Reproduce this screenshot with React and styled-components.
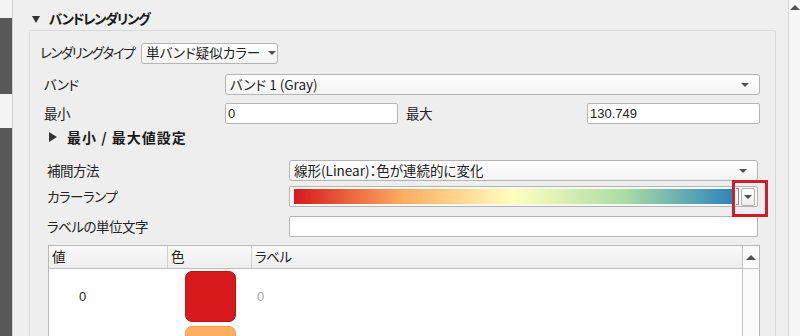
import React from 'react';
import styled, { createGlobalStyle } from 'styled-components';

const Global = createGlobalStyle`
  html, body {
    margin: 0;
    padding: 0;
    background: #efefef;
    overflow: hidden;
  }
  body {
    font-family: "Noto Sans CJK JP", "Noto Sans", "Liberation Sans", sans-serif;
    font-size: 13px;
    color: #222;
    font-feature-settings: "palt";
  }
`;

const Window = styled.div`
  width: 800px;
  height: 336px;
  display: flex;
  overflow: hidden;
`;

const SideStrip = styled.div`
  width: 12px;
  display: flex;
  flex-direction: column;
  border-right: 1px solid #d2d2d2;
`;

const StripBlock = styled.div`
  height: ${p => (p.$h ? `${p.$h}px` : 'auto')};
  flex: ${p => (p.$h ? 'none' : 1)};
  background: ${p => (p.$dark ? '#585858' : '#f4f4f4')};
`;

const Main = styled.div`
  flex: 1;
  min-height: 0;
  padding: 8px 0 0 16px;
  display: flex;
  flex-direction: column;
`;

const SectionTitle = styled.div`
  flex: none;
  height: 22px;
  display: flex;
  align-items: center;
  gap: 9px;
  padding-left: 3px;
  font-weight: 700;
  font-size: 13.5px;
  letter-spacing: -1.4px;
  line-height: 1;
  color: #1a1a1a;
`;

const Arrow = styled.span`
  width: 0;
  height: 0;
  border-left: ${p => (p.$dir === 'right' ? '8px solid #333' : '4.5px solid transparent')};
  border-right: ${p => (p.$dir === 'right' ? '0' : '4.5px solid transparent')};
  border-top: ${p => (p.$dir === 'right' ? '5px solid transparent' : '7px solid #333')};
  border-bottom: ${p => (p.$dir === 'right' ? '5px solid transparent' : '0')};
`;

const GroupBox = styled.div`
  width: 747px;
  flex: 1;
  min-height: 0;
  overflow: hidden;
  border: 1px solid #d8d8d8;
  border-bottom: none;
  border-radius: 2px 2px 0 0;
  background: #eeeeee;
  padding: 11px 0 0 10px;
  box-sizing: border-box;
  display: flex;
  flex-direction: column;
`;

const Row = styled.div`
  flex: none;
  display: flex;
  align-items: center;
  height: ${p => p.$h || 29}px;
  padding-left: ${p => p.$indent || 0}px;
  gap: ${p => p.$gap || 0}px;
`;

const Label = styled.div`
  width: ${p => (p.$w ? `${p.$w}px` : 'auto')};
  flex: none;
  padding-left: ${p => p.$pad || 0}px;
  box-sizing: border-box;
  font-size: 13.5px;
  letter-spacing: ${p => (p.$tight ? '-1.5px' : '-0.5px')};
  line-height: 1;
  white-space: nowrap;
`;

const Combo = styled.div`
  width: ${p => p.$w}px;
  height: 21px;
  box-sizing: border-box;
  border: 1px solid #b4b4b4;
  border-radius: 3px;
  background: linear-gradient(#ffffff, #f3f3f3);
  display: flex;
  align-items: center;
  padding: 0 10px 0 4px;
  gap: 8px;
  font-size: 13.5px;
  line-height: 1;
  color: #222;
  span { flex: 1; white-space: nowrap; }
`;

const DownTri = styled.i`
  width: 0;
  height: 0;
  flex: none;
  border-left: 4px solid transparent;
  border-right: 4px solid transparent;
  border-top: 4px solid #505050;
`;

const UpTri = styled.i`
  width: 0;
  height: 0;
  border-left: 5px solid transparent;
  border-right: 5px solid transparent;
  border-bottom: 5px solid #505050;
`;

const Input = styled.div`
  width: ${p => p.$w}px;
  height: 21px;
  box-sizing: border-box;
  border: 1px solid #b4b4b4;
  border-radius: 2px;
  background: #fff;
  display: flex;
  align-items: center;
  padding-left: 2px;
  font-family: "Liberation Sans", "Noto Sans CJK JP", sans-serif;
  font-size: 13px;
  color: #222;
`;

const SubTitle = styled(SectionTitle)`
  height: 26px;
  padding-left: 9px;
  gap: 10px;
  font-size: 14px;
  letter-spacing: 1px;
`;

const RampField = styled.div`
  position: relative;
  width: 469px;
  height: 21px;
  box-sizing: border-box;
  border: 1px solid #b4b4b4;
  border-radius: 2px;
  background: #f8f8f8;
  display: flex;
  align-items: center;
  padding: 0 2px 0 4px;
  gap: 2px;
`;

const Gradient = styled.div`
  flex: 1;
  height: 15px;
  background: linear-gradient(90deg, #d7191c 0%, #fdae61 25%, #ffffbf 50%, #abdda4 75%, #2b83ba 100%);
`;

const RampEnd = styled.div`
  width: 2px;
  height: 15px;
  border: 1px solid #8a8a8a;
  border-left: none;
`;

const RampButton = styled.div`
  width: 14px;
  height: 18px;
  box-sizing: border-box;
  border: 1px solid #b4b4b4;
  border-radius: 2px;
  background: linear-gradient(#ffffff, #ededed);
  display: flex;
  align-items: center;
  justify-content: center;
`;

const Highlight = styled.div`
  position: absolute;
  right: -11px;
  top: -7px;
  width: 36px;
  height: 37px;
  box-sizing: border-box;
  border: 3px solid #cc1e2c;
  pointer-events: none;
`;

const Table = styled.div`
  margin: 8px 0 0 8px;
  width: 710px;
  flex: 1;
  min-height: 0;
  border: 1px solid #b8b8b8;
  border-bottom: none;
  background: #fff;
  display: flex;
`;

const TableBody = styled.div`
  flex: 1;
  display: flex;
  flex-direction: column;
`;

const HeaderRow = styled.div`
  flex: none;
  height: 22px;
  display: grid;
  grid-template-columns: 119px 84px 1fr;
  background: linear-gradient(#fbfbfb, #ededed);
  border-bottom: 1px solid #bdbdbd;
`;

const HeaderCell = styled.div`
  display: flex;
  align-items: center;
  padding-left: 3px;
  border-right: 1px solid #d0d0d0;
  font-size: 13.5px;
  letter-spacing: -0.5px;
  line-height: 1;
  &:last-child { border-right: none; }
`;

const DataRow = styled.div`
  height: 55px;
  display: grid;
  grid-template-columns: 119px 84px 1fr;
  align-items: center;
  flex: none;
`;

const ValueCell = styled.div`
  font-family: "Liberation Sans", sans-serif;
  font-size: 13px;
  color: ${p => (p.$muted ? '#a8a8a8' : '#222')};
  padding-left: ${p => p.$pad}px;
`;

const Swatch = styled.div`
  margin-left: 17px;
  width: 51px;
  height: 51px;
  box-sizing: border-box;
  border-radius: 7px;
  background: ${p => p.$color};
  border: 1px solid ${p => p.$edge};
`;

const TableScroll = styled.div`
  width: 16px;
  border-left: 1px solid #c4c4c4;
  background: #fafafa;
  display: flex;
  flex-direction: column;
  align-items: center;
`;

const ScrollCap = styled.div`
  width: 100%;
  height: 22px;
  border-bottom: 1px solid #c8c8c8;
  display: flex;
  align-items: center;
  justify-content: center;
`;

const PageScroll = styled.div`
  width: 11px;
  margin-left: 11px;
  border-left: 1px solid #d6d6d6;
  background: #f7f7f7;
  display: flex;
  justify-content: center;
  padding-top: 5px;
`;

const ramp = [
  { value: '0', color: '#d7191c', edge: '#b51317' },
  { value: '', color: '#fdae61', edge: '#f0a050' },
];

export default function App() {
  return (
    <>
      <Global />
      <Window>
        <SideStrip>
          <StripBlock $h={18} />
          <StripBlock $h={76} $dark />
          <StripBlock $h={34} />
          <StripBlock $dark />
        </SideStrip>
        <Main>
          <SectionTitle>
            <Arrow />
            バンドレンダリング
          </SectionTitle>
          <GroupBox>
            <Row $h={22} $gap={7}>
              <Label $tight>レンダリングタイプ</Label>
              <Combo $w={137}>
                <span>単バンド疑似カラー</span>
                <DownTri />
              </Combo>
            </Row>
            <Row $h={10} />
            <Row $h={21} $indent={4}>
              <Label $w={181}>バンド</Label>
              <Combo $w={535}>
                <span>バンド 1 (Gray)</span>
                <DownTri />
              </Combo>
            </Row>
            <Row $h={8} />
            <Row $h={21} $indent={4}>
              <Label $w={181}>最小</Label>
              <Input $w={173}>0</Input>
              <Label $w={189} $pad={8}>最大</Label>
              <Input $w={173}>130.749</Input>
            </Row>
            <SubTitle>
              <Arrow $dir="right" />
              最小 / 最大値設定
            </SubTitle>
            <Row $h={10} />
            <Row $h={21} $indent={7}>
              <Label $w={242}>補間方法</Label>
              <Combo $w={469}>
                <span>線形(Linear)：色が連続的に変化</span>
                <DownTri />
              </Combo>
            </Row>
            <Row $h={5} />
            <Row $h={21} $indent={7}>
              <Label $w={242}>カラーランプ</Label>
              <RampField>
                <Gradient />
                <RampEnd />
                <RampButton>
                  <DownTri />
                </RampButton>
                <Highlight />
              </RampField>
            </Row>
            <Row $h={9} />
            <Row $h={21} $indent={7}>
              <Label $w={242}>ラベルの単位文字</Label>
              <Input $w={469} />
            </Row>
            <Table>
              <TableBody>
                <HeaderRow>
                  <HeaderCell>値</HeaderCell>
                  <HeaderCell>色</HeaderCell>
                  <HeaderCell>ラベル</HeaderCell>
                </HeaderRow>
                {ramp.map((r, i) => (
                  <DataRow key={i}>
                    <ValueCell $pad={30}>{r.value}</ValueCell>
                    <Swatch $color={r.color} $edge={r.edge} />
                    <ValueCell $pad={5} $muted>{r.value}</ValueCell>
                  </DataRow>
                ))}
              </TableBody>
              <TableScroll>
                <ScrollCap>
                  <UpTri />
                </ScrollCap>
              </TableScroll>
            </Table>
          </GroupBox>
        </Main>
        <PageScroll>
          <UpTri />
        </PageScroll>
      </Window>
    </>
  );
}
